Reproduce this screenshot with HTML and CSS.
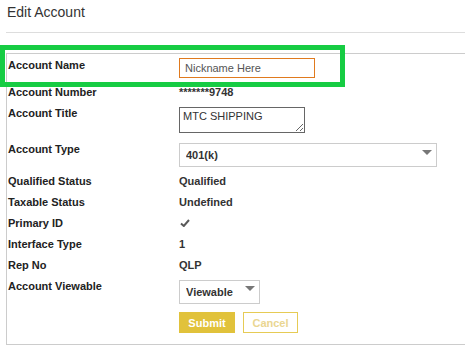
FILE: index.html
```html
<!DOCTYPE html>
<html lang="en">

<head>
    <meta charset="UTF-8">
    <meta name="viewport" content="width=device-width, initial-scale=1.0">
    <title>Edit Account</title>
    <link rel="stylesheet" href="styles.css">
</head>

<body>
    <div class="page">
        <h1 class="page-title">Edit Account</h1>
        <hr class="divider">

        <form class="account-card">
            <div class="row">
                <div class="label">Account Name</div>
                <div class="value"><input class="text-input" type="text" value="Nickname Here"></div>
            </div>
            <div class="row">
                <div class="label">Account Number</div>
                <div class="value strong">*******9748</div>
            </div>
            <div class="row">
                <div class="label">Account Title</div>
                <div class="value"><textarea class="text-area">MTC SHIPPING</textarea></div>
            </div>
            <div class="row">
                <div class="label">Account Type</div>
                <div class="value">
                    <span class="select-wrap select-wide">
                        <select class="select">
                            <option>401(k)</option>
                        </select>
                    </span>
                </div>
            </div>
            <div class="row">
                <div class="label">Qualified Status</div>
                <div class="value strong">Qualified</div>
            </div>
            <div class="row">
                <div class="label">Taxable Status</div>
                <div class="value strong">Undefined</div>
            </div>
            <div class="row">
                <div class="label">Primary ID</div>
                <div class="value">
                    <svg class="check" width="10" height="8" viewBox="0 0 10 8">
                        <path d="M1 4.5 L3.8 7 L9 1" fill="none" stroke="#5a5a5a" stroke-width="2" />
                    </svg>
                </div>
            </div>
            <div class="row">
                <div class="label">Interface Type</div>
                <div class="value strong">1</div>
            </div>
            <div class="row">
                <div class="label">Rep No</div>
                <div class="value strong">QLP</div>
            </div>
            <div class="row">
                <div class="label">Account Viewable</div>
                <div class="value">
                    <span class="select-wrap select-small">
                        <select class="select">
                            <option>Viewable</option>
                        </select>
                    </span>
                </div>
            </div>
            <div class="row actions">
                <div class="label"></div>
                <div class="value buttons">
                    <button type="button" class="btn btn-submit">Submit</button>
                    <button type="button" class="btn btn-cancel">Cancel</button>
                </div>
            </div>
        </form>
    </div>

    <!-- highlight annotation -->
    <div class="highlight"></div>
</body>

</html>
```

FILE: styles.css
```css
html,
body {
    margin: 0;
    padding: 0;
    overflow: hidden;
    background: #fff;
}

body {
    position: relative;
    font-family: "Liberation Sans", Arial, sans-serif;
    color: #222;
}

.page {
    padding-left: 6px;
}

.page-title {
    margin: 0 0 0 1px;
    padding-top: 4px;
    font-size: 14px;
    line-height: 16px;
    font-weight: normal;
    color: #333;
}

.divider {
    margin: 12px 0 20px;
    border: 0;
    border-top: 1px solid #ddd;
    height: 0;
}

/* form card */
.account-card {
    width: 470px;
    padding: 1px 0 0 1px;
    border: 1px solid #ccc;
    border-right: 0;
    box-sizing: border-box;
}

.row {
    display: flex;
    align-items: flex-start;
    padding: 3px 0 4px;
    font-size: 11px;
    line-height: 14px;
}

.label {
    width: 171px;
    flex: none;
    font-weight: bold;
    color: #222;
}

.value {
    color: #333;
}

.strong {
    font-weight: bold;
}

.text-input {
    display: block;
    width: 136px;
    height: 20px;
    padding: 0 5px;
    box-sizing: border-box;
    border: 1px solid #e07a1e;
    font-family: inherit;
    font-size: 11px;
    color: #555;
    outline: none;
}

.text-area {
    display: block;
    width: 126px;
    height: 26px;
    margin: 1px 0 2px;
    padding: 1px 3px;
    box-sizing: border-box;
    border: 1px solid #666;
    font-family: inherit;
    font-size: 11px;
    line-height: 14px;
    color: #333;
    resize: both;
}

/* selects */
.select-wrap {
    position: relative;
    display: block;
    margin-top: 1px;
}

.select-wide {
    width: 258px;
}

.select-small {
    width: 81px;
}

.select {
    display: block;
    width: 100%;
    height: 24px;
    padding: 0 6px;
    box-sizing: border-box;
    border: 1px solid #ccc;
    border-radius: 0;
    background: #fff;
    font-family: inherit;
    font-size: 11px;
    font-weight: bold;
    color: #333;
    appearance: none;
    -webkit-appearance: none;
}

.select-wrap::after {
    content: '';
    position: absolute;
    right: 5px;
    top: 7px;
    border-left: 5px solid transparent;
    border-right: 5px solid transparent;
    border-top: 5px solid #777;
    pointer-events: none;
}

.select-small::after {
    top: 6px;
}

.check {
    display: block;
    margin: 3px 0 0 1px;
}

/* buttons */
.actions {
    padding: 4px 0 11px;
}

.buttons {
    display: flex;
    gap: 8px;
}

.btn {
    height: 21px;
    padding: 0;
    box-sizing: border-box;
    font-family: inherit;
    font-size: 11px;
    font-weight: bold;
    cursor: pointer;
}

.btn-submit {
    width: 56px;
    border: 1px solid #e1c23b;
    background: #e1c23b;
    color: #fff;
}

.btn-cancel {
    width: 55px;
    border: 1px solid #e6cb55;
    background: #fff;
    color: #ead691;
}

/* green annotation box */
.highlight {
    position: absolute;
    left: 0;
    top: 45px;
    width: 345px;
    height: 42px;
    border: 5px solid #16cc43;
    box-sizing: border-box;
    pointer-events: none;
}
```
